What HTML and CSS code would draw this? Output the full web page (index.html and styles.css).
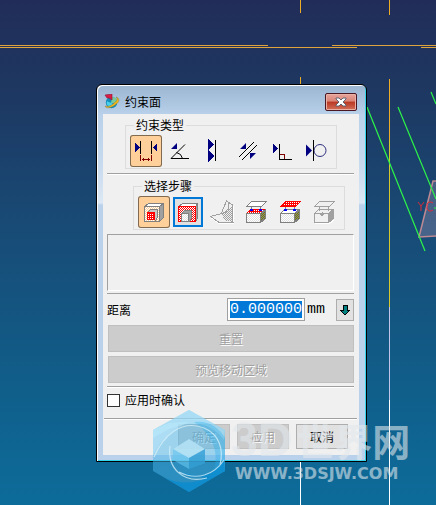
FILE: index.html
```
<!DOCTYPE html>
<html lang="zh-CN">
<head>
<meta charset="utf-8">
<title>约束面</title>
<link rel="stylesheet" href="styles.css">
</head>
<body>
<svg class="scene" width="436" height="505" viewBox="0 0 436 505" aria-hidden="true">
  <g shape-rendering="crispEdges" fill="#e0a43c">
    <path d="M0 45h268v1H0zM332 45h104v1H332zM0 47h357v1H0zM421 47h15v1h-15z"/>
    <path fill="#edac25" d="M300 0h1v13h-1zM300 77h1v7h-1zM389 0h1v15h-1zM389 79h1v61h-1z"/>
    <path fill="#d6c72c" d="M389 140h1v167h-1z"/>
    <path fill="#c3c2e8" d="M389 307h1v93h-1z"/>
    <path fill="#fff" d="M389 400h1v105h-1zM300 462h1v43h-1z"/>
  </g>
  <path d="M419 237L433 181H436V236Z" fill="#c3a0bb" fill-opacity=".28"/>
  <path d="M436 181H433L419 237L436 236" fill="none" stroke="#bd8993" stroke-width="1.5"/>
  <path d="M367 107L425 251M398 107L436 199M431 92L436 104" fill="none" stroke="#2df548" stroke-width="1.2"/>
  <path d="M418 202l3 4l3-4M421 206v5M433 203l-2-1h-2l-2 2v5l2 2h2l2-1" fill="none" stroke="#d92c39"/>
  <path d="M434 208h2" stroke="#2df548"/>
</svg>

<svg class="defs" width="0" height="0" aria-hidden="true">
  <defs>
    <pattern id="red" width="2" height="2" patternUnits="userSpaceOnUse"><path fill="#fff" d="M0 0h2v2H0z"/><path fill="#f00" d="M0 0h1v1H0zM1 1h1v1H1z"/></pattern>
    <pattern id="redfull" width="2" height="2" patternUnits="userSpaceOnUse"><path fill="#f00" d="M0 0h2v2H0z"/><path fill="#fff" d="M0 0h1v1H0z"/></pattern>
    <pattern id="cream" width="2" height="2" patternUnits="userSpaceOnUse"><path fill="#fff" d="M0 0h2v2H0z"/><path fill="#ffd09a" d="M0 0h1v1H0zM1 1h1v1H1z"/></pattern>
    <pattern id="pale" width="2" height="2" patternUnits="userSpaceOnUse"><path fill="#fff" d="M0 0h2v2H0z"/><path fill="#e0e0e0" d="M0 0h1v1H0zM1 1h1v1H1z"/></pattern>
    <pattern id="grey" width="2" height="2" patternUnits="userSpaceOnUse"><path fill="#f0f0f0" d="M0 0h2v2H0z"/><path fill="#a0a0a0" d="M0 0h1v1H0zM1 1h1v1H1z"/></pattern>
    <pattern id="olive" width="2" height="2" patternUnits="userSpaceOnUse"><path fill="#808080" d="M0 0h2v2H0z"/><path fill="#808000" d="M0 0h1v1H0zM1 1h1v1H1z"/></pattern>
  </defs>
</svg>

<form class="dialog">
  <header class="title-bar">
    <svg class="app-icon" width="16" height="16" viewBox="0 0 16 16" aria-hidden="true">
      <circle cx="7.5" cy="8.5" r="5.7" fill="#168bb5"/>
      <path d="M8 3c5 0 6 4 4 6L7 9z" fill="#76ca9b"/>
      <path d="M3 7c2 2 4 1 6 3l-3 3c-3-1-4-3-3-6z" fill="#45d1ee"/>
      <path d="M12 3c4 1 4 5-1 8c-4 3-9 4-10 1c3 1 6 0 9-3c3-2 4-4 2-6z" fill="#efb51b" stroke="#6d7541" stroke-width=".4"/>
      <path d="M1 1L8 0V6L5 4L3 4Z" fill="#d91d44" stroke="#8d1637" stroke-width=".6"/>
    </svg>
    <h1 class="title">约束面</h1>
    <button class="close" type="button" aria-label="关闭">
      <svg width="12" height="10" viewBox="0 0 12 10"><path d="M1 1h3l2 2l2-2h3v1L8 5l3 3v1H8L6 7L4 9H1V8l3-3L1 2z" fill="#fff" stroke="#555b6b" stroke-width=".9"/></svg>
    </button>
  </header>
  <main class="content">
    <fieldset class="tools tools-type">
      <legend>约束类型</legend>
      <button class="tool active" type="button" aria-label="距离"><svg viewBox="0 0 32 32" shape-rendering="crispEdges"><path class="navy" d="M5 8l5 4.500l-5 4.500zM27 8l-4 4.500l4 4.500z"/><path class="line" d="M10.500 6v13M21.500 6v13"/><path class="maroon" d="M10.500 20v6M21.500 20v6M12 24.500h8M13.500 23v3M18.500 23v3"/></svg></button>
      <button class="tool" type="button" aria-label="角度"><svg viewBox="0 0 32 32"><path class="navy" d="M7 14l6-6v6z"/><path class="line" d="M21 9.500L7 23.500H25M12.500 17.500q5 1 6 6"/></svg></button>
      <button class="tool" type="button" aria-label="共面"><svg viewBox="0 0 32 32" shape-rendering="crispEdges"><path class="navy" d="M10 4l6 6l-6 5zM10 15l6 6l-6 6z"/><path class="line" d="M17.500 5v21"/></svg></button>
      <button class="tool" type="button" aria-label="平行"><svg viewBox="0 0 32 32"><path class="navy" d="M8 14l6-6v6zM18 18h6l-6 6z"/><path class="line" d="M22 7L7 22M25 10L10 25"/></svg></button>
      <button class="tool" type="button" aria-label="垂直"><svg viewBox="0 0 32 32" shape-rendering="crispEdges"><path class="navy" d="M7 9l5 4.500l-5 4.500z"/><path class="maroon" d="M14 19.500h4.500V24"/><path class="line" d="M13.500 9v15.500H26"/></svg></button>
      <button class="tool" type="button" aria-label="相切"><svg viewBox="0 0 32 32"><path class="navy" d="M6 9.500l6 6l-6 6z"/><circle cx="20" cy="15.500" r="6" fill="none" stroke="#303080"/><path class="line" d="M13.500 5v21"/></svg></button>
    </fieldset>
    <hr>
    <fieldset class="tools tools-step">
      <legend>选择步骤</legend>
      <button class="tool active" type="button" aria-label="选择面"><svg viewBox="0 0 32 32" shape-rendering="crispEdges"><path class="edge" fill="#fff" d="M6.500 10.500l4-3h15l-4 3z"/><path class="edge" fill="#a0a0a0" d="M21.500 10.500l4-3v14l-4 4z"/><path class="edge" fill="url(#cream)" d="M6.500 10.500h15v15h-15z"/><path class="edge" fill="#c8c8c8" d="M9.500 16.500l3-3h7v8l-2 3z"/><path fill="url(#redfull)" stroke="#f00" d="M9.500 16.500h7v7h-7z"/></svg></button>
      <button class="tool focused" type="button" aria-label="选择区域"><svg viewBox="1 1 30 30" shape-rendering="crispEdges"><path class="edge" fill="#fff" d="M6.500 10.500l4-3h15l-2 3z"/><path class="edge" fill="#a0a0a0" d="M23.500 10.500l2-3v15l-2 3z"/><path fill="url(#red)" stroke="#f00" d="M6.500 10.500h17v15h-17z"/><path class="edge" fill="#a0a0a0" d="M9.500 17.500l3-3h7v8l-2 3z"/><path class="edge" fill="url(#pale)" d="M9.500 17.500h7v8h-7z"/></svg></button>
      <button class="tool" type="button" aria-label="边界" disabled><svg viewBox="0 0 32 32" shape-rendering="crispEdges"><path fill="none" stroke="#fff" d="M5 21.500l8 6h14.500v-18"/><path class="edge-off" fill="#f0f0f0" d="M4.500 20.500l11-3l11 8.500h-14z"/><path class="edge-off" fill="#f0f0f0" d="M15.500 17l5-12l6 4v17l-5-3z"/><path fill="url(#grey)" d="M20 14l6-4v15h-7l-3-7z"/><path class="edge-off" fill="none" d="M22.500 6v9M16 17.500l6-2"/></svg></button>
      <button class="tool" type="button" aria-label="参考底面"><svg viewBox="0 0 32 32" shape-rendering="crispEdges"><path class="edge" fill="#fff" d="M6.500 10.500l5-5h15l-5 5z"/><path fill="url(#redfull)" stroke="#f00" d="M6.500 17.500l4-4h15l-5 4z"/><path class="edge" fill="url(#olive)" d="M20.500 17.500l5-4v9l-5 4z"/><path class="edge" fill="url(#pale)" d="M6.500 17.500h14v9h-14z"/><path class="edge" fill="none" d="M11.500 11v4M20.500 11v4"/><path fill="#00f" d="M10 13h3v2h-3zM19 13h3v2h-3z"/></svg></button>
      <button class="tool" type="button" aria-label="参考顶面"><svg viewBox="0 0 32 32" shape-rendering="crispEdges"><path fill="url(#redfull)" stroke="#f00" d="M6.500 10.500l5-5h15l-5 5z"/><path class="edge" fill="#fff" d="M6.500 17.500l4-4h15l-5 4z"/><path class="edge" fill="url(#olive)" d="M20.500 17.500l5-4v9l-5 4z"/><path class="edge" fill="url(#pale)" d="M6.500 17.500h14v9h-14z"/><path class="edge" fill="none" d="M11.500 11v4M20.500 11v4"/><path fill="#00f" d="M10 13h3v2h-3zM19 13h3v2h-3z"/></svg></button>
      <button class="tool" type="button" aria-label="参考点" disabled><svg viewBox="0 0 32 32" shape-rendering="crispEdges"><path fill="none" stroke="#fff" d="M7 27.500h14.500l5-4"/><path class="edge-off" fill="#f0f0f0" d="M6.500 10.500l5-5h15l-5 5zM6.500 17.500l4-4h15l-5 4zM6.500 17.500h14v9h-14z"/><path class="edge-off" fill="#a0a0a0" d="M20.500 17.500l5-4v9l-5 4z"/><path class="edge-off" fill="none" d="M11.500 11v4M20.500 11v4"/><path fill="#a0a0a0" d="M12 18l2-2l2 2l-2 3z"/></svg></button>
    </fieldset>
    <hr>
    <div class="selection-list"></div>
    <hr class="below-list">
    <div class="distance">
      <label for="distance">距离</label>
      <input id="distance" type="text" value="0.000000">
      <span class="unit">mm</span>
      <button class="more" type="button" aria-label="选项"><svg width="12" height="10" viewBox="0 0 12 10" shape-rendering="crispEdges"><path d="M4 0h4v5h3l-5 5l-5-5h3z" fill="#008080" stroke="#000"/></svg></button>
    </div>
    <div class="wide-buttons">
      <button type="button" disabled>重置</button>
      <button type="button" disabled>预览移动区域</button>
    </div>
    <hr>
    <label class="confirm"><input type="checkbox">应用时确认</label>
    <hr class="footer-rule">
    <footer class="actions">
      <button type="button" disabled>确定</button>
      <button type="button" disabled>应用</button>
      <button type="button">取消</button>
    </footer>
  </main>
</form>

<aside class="watermark">
  <svg width="72" height="82" viewBox="0 0 72 82" aria-hidden="true">
    <path d="M36 0L72 20V61L36 82L0 61V20Z" fill="#4ab6ea" fill-opacity=".5"/>
    <path d="M36 0L72 20L71 30C58 12 40 10 16 19L0 28V20Z" fill="#b9e9fc" fill-opacity=".5"/>
    <path d="M0 20L16 13L36 12C18 20 7 31 0 45Z" fill="#c2edff" fill-opacity=".4"/>
    <path d="M72 23V61L58 68C67 49 64 28 41 12C55 10 66 17 72 28Z" fill="#28acea" fill-opacity=".35"/>
    <path d="M26 62C44 71 61 65 71 50L72 61L36 82L12 68C28 75 44 73 54 68Z" fill="#078bd0" fill-opacity=".75"/>
    <path d="M36 29L52 39V53L36 59L20 50V39Z" fill="#65c6ef" fill-opacity=".6"/>
    <path d="M20 39L36 29L52 39L36 48Z" fill="#c9eaf7" fill-opacity=".7"/>
    <path d="M36 48L52 39V53L36 59Z" fill="#1587c6" fill-opacity=".5"/>
    <path d="M1 47C10 26 28 9 51 18C66 24 71 39 67 55M17 36C14 59 31 74 54 68M26 62C44 71 61 65 71 50" fill="none" stroke="#d8f2fb" stroke-opacity=".75" stroke-width="1.200"/>
  </svg>
  <div class="watermark-text">
    <div class="brand"><span class="brand-latin">3D</span><span>世界网</span></div>
    <div class="site">WWW.3DSJW.COM</div>
  </div>
</aside>
</body>
</html>
```
FILE: styles.css
```
* {
  box-sizing: border-box;
}

body {
  position: relative;
  margin: 0;
  min-height: 100vh;
  overflow: hidden;
  background: linear-gradient(#212d58, #1d3963 20%, #174d78 48%, #105f8b 78%, #0d6c9a);
  font: 12px/16px "Noto Sans CJK SC", sans-serif;
  color: #000;
}

.scene,
.defs {
  position: absolute;
  top: 0;
  left: 0;
}

button,
input {
  margin: 0;
  padding: 0;
  font: inherit;
  color: inherit;
}

/* Window frame */
.dialog {
  position: absolute;
  left: 96px;
  top: 84px;
  width: 271px;
  padding: 0 6px 6px 5px;
  border: 1px solid #000;
  border-radius: 6px 6px 0 0;
  background: linear-gradient(#9bb5d1, #b9d1ea 30px, #c7daee 80px, #dce8f4 118px, #b9d1ea 120px);
  box-shadow: inset 1px 1px #fff, inset -1px -1px #35d4ed;
}

.title-bar {
  display: flex;
  align-items: center;
  height: 29px;
  padding: 5px 3px 0 2px;
}

.title {
  flex: 1;
  margin: 0 0 0 5px;
  font-size: 12px;
  font-weight: 400;
}

.close {
  display: flex;
  align-items: center;
  justify-content: center;
  width: 32px;
  height: 18px;
  border: 1px solid #4b1722;
  border-radius: 2px;
  background: linear-gradient(#e9a49a, #d98477 45%, #b93722 50%, #d2705a);
  box-shadow: inset 0 0 0 1px #e9b0a6;
}

.content {
  margin-left: 1px;
  margin-right: 1px;
  padding: 3px 5px 6px 4px;
  background: #f0f0f0;
}

hr {
  height: 2px;
  margin: 0;
  border: 0;
  border-top: 1px solid #a0a0a0;
  border-bottom: 1px solid #fff;
}

/* Icon groups */
.tools {
  position: relative;
  display: flex;
  gap: 2px;
  width: 212px;
  margin: 8px 0 4px 18px;
  padding: 9px 4px 1px;
  border: 1px solid #dcdcdc;
}

.tools-step {
  margin: 11px 0 4px 26px;
}

.tools legend {
  position: absolute;
  top: -9px;
  left: 8px;
  padding: 0 2px;
  background: #f0f0f0;
}

.tool {
  width: 32px;
  height: 32px;
  border: 0;
  background: transparent;
}

.tool svg {
  display: block;
  width: 32px;
  height: 32px;
}

.tool.active {
  border-radius: 3px;
  background: #ffd09a;
  box-shadow: inset 0 0 0 1px #806a50;
}

.tool.focused {
  margin: 1px;
  width: 30px;
  height: 30px;
  background: #e1e1e1;
  box-shadow: inset 0 0 0 2px #0078d7;
}

.tool.focused svg {
  width: 30px;
  height: 30px;
}

.navy {
  fill: #000080;
}

.line {
  fill: none;
  stroke: #000;
}

.maroon {
  fill: none;
  stroke: #800000;
}

.edge {
  stroke: #808080;
}

.edge-off {
  stroke: #a0a0a0;
}

.tools-step + hr {
  display: none;
}

.selection-list {
  height: 57px;
  border: 1px solid #a0a0a0;
  border-right-color: #fff;
  border-bottom-color: #fff;
}

.below-list {
  height: 1px;
  margin-top: 2px;
  border-bottom: 0;
}

/* Distance row */
.distance {
  display: flex;
  align-items: center;
  height: 23px;
  margin-top: 4px;
}

.distance label {
  flex: 1;
}

.distance input {
  width: 78px;
  height: 23px;
  padding: 0 2px;
  border: 1px solid #a0a0a0;
  background: linear-gradient(#0078d7, #0078d7) 2px 2px / 72px 17px no-repeat #fff;
  color: #fff;
  font: 15px/17px "Liberation Mono", monospace;
}

.unit {
  width: 31px;
  padding-left: 2px;
  font: 15px/16px "Liberation Mono", monospace;
}

.more {
  display: flex;
  align-items: center;
  justify-content: center;
  width: 18px;
  height: 22px;
  border: 1px solid #adadad;
  background: #e1e1e1;
}

/* Push buttons */
.wide-buttons {
  display: flex;
  flex-direction: column;
  gap: 4px;
  margin: 4px 0 3px 1px;
}

.wide-buttons button,
.actions button {
  height: 27px;
  border: 1px solid #adadad;
  background: #e1e1e1;
}

.wide-buttons button:disabled,
.actions button:disabled {
  border-color: #bfbfbf;
  background: #ccc;
  color: #a0a0a0;
  text-shadow: 1px 1px #fff;
}

.confirm {
  display: flex;
  align-items: center;
  gap: 5px;
  height: 24px;
}

.confirm input {
  appearance: none;
  width: 13px;
  height: 13px;
  border: 1px solid #333;
  background: #fff;
}

.footer-rule {
  margin: 6px -3px 0;
}

.actions {
  display: flex;
  justify-content: flex-end;
  gap: 7px;
  padding: 4px 6px 0 0;
}

.actions button {
  width: 52px;
  height: 25px;
}

/* Watermark over the window */
.watermark {
  position: absolute;
  left: 153px;
  top: 410px;
  display: flex;
  gap: 6px;
  pointer-events: none;
}

.watermark-text {
  padding-top: 10px;
  color: #e3e9ed;
  opacity: .58;
}

.brand {
  display: flex;
  align-items: center;
  gap: 4px;
  height: 40px;
  font-size: 38px;
  font-weight: 700;
  line-height: 40px;
}

.brand-latin {
  font-family: "Liberation Sans", sans-serif;
  font-size: 48px;
}

.site {
  padding: 4px 0 0 4px;
  font: 700 16px/20px "DejaVu Sans", sans-serif;
}
```
